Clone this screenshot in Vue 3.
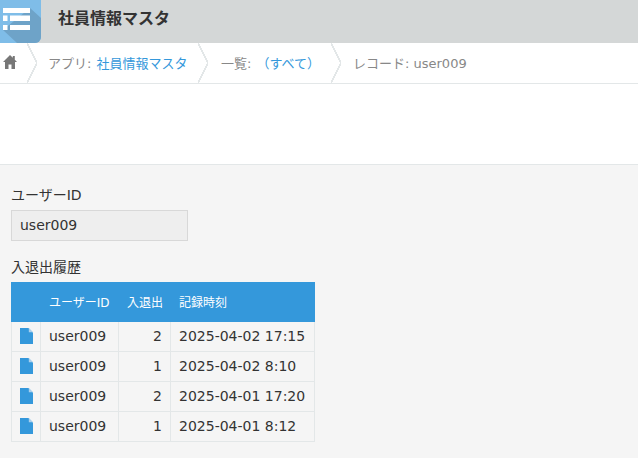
<script setup>
const rows = [
  { id: "user009", type: 2, time: "2025-04-02 17:15" },
  { id: "user009", type: 1, time: "2025-04-02 8:10" },
  { id: "user009", type: 2, time: "2025-04-01 17:20" },
  { id: "user009", type: 1, time: "2025-04-01 8:12" },
];
</script>

<template>
  <div class="page">
    <header class="app-header">
      <div class="app-icon">
        <svg width="41" height="43" viewBox="0 0 41 43">
          <path d="M0 0H41V37a6 6 0 0 1-6 6H0Z" fill="#7fbde8" />
          <path d="M3 30 30 8 41 18V37a6 6 0 0 1-6 6H17Z" fill="#6ea3c8" />
          <path d="M3 8H30V13H3ZM3 15.500H7.500V21H3ZM10 15.500H30V21H10ZM3 25H7.500V30H3ZM10 25H30V30H10Z" fill="#fff" />
        </svg>
      </div>
      <h1 class="app-title">社員情報マスタ</h1>
    </header>

    <nav class="breadcrumb">
      <div class="crumb crumb--home">
        <svg width="14" height="14" viewBox="0 0 14 14">
          <path d="M7 0 0 7H2V14H5.500V9.500H8.500V14H12V7H14L11.800 4.800V1H9.800V2.800Z" fill="#777" />
        </svg>
      </div>
      <div class="crumb crumb--app">アプリ: <a>社員情報マスタ</a></div>
      <div class="crumb crumb--list">一覧: <a>（すべて）</a></div>
      <div class="crumb crumb--record">レコード: user009</div>
    </nav>

    <div class="toolbar"></div>

    <main class="record">
      <label class="field-label">ユーザーID</label>
      <div class="field-value">user009</div>

      <label class="field-label field-label--table">入退出履歴</label>
      <table class="history">
        <thead>
          <tr>
            <th class="col-icon"></th>
            <th class="col-id">ユーザーID</th>
            <th class="col-type">入退出</th>
            <th class="col-time">記録時刻</th>
          </tr>
        </thead>
        <tbody>
          <tr v-for="(row, i) in rows" :key="i">
            <td class="cell-icon">
              <svg width="13" height="16" viewBox="0 0 13 16">
                <path d="M0 0H8.500L13 4.500V16H0Z" fill="#3498db" />
                <path d="M8.800 0 13 4.200H8.800Z" fill="#a9d0ee" />
              </svg>
            </td>
            <td>{{ row.id }}</td>
            <td class="cell-num">{{ row.type }}</td>
            <td>{{ row.time }}</td>
          </tr>
        </tbody>
      </table>
    </main>
  </div>
</template>

<style>
html,
body {
  margin: 0;
  background: #f5f5f5;
}
</style>

<style scoped>
.page {
  width: 638px;
  height: 458px;
  overflow: hidden;
  font-family: "DejaVu Sans", "Noto Sans CJK JP", sans-serif;
  font-size: 14px;
  color: #333;
  background: #f5f5f5;
}

.app-header {
  display: flex;
  align-items: center;
  height: 43px;
  background: #d4d7d7;
}

.app-icon {
  width: 41px;
  height: 43px;
}

.app-icon svg {
  display: block;
}

.app-title {
  margin: 0 0 10px 17px;
  font-size: 16px;
  font-weight: 700;
  color: #333;
}

.breadcrumb {
  display: flex;
  height: 40px;
  background: #fff;
  border-bottom: 1px solid #e3e7e8;
  color: #888;
  font-size: 13px;
}

.crumb {
  position: relative;
  display: flex;
  align-items: center;
  gap: 5px;
  box-sizing: border-box;
  padding-bottom: 2px;
}

.crumb--home {
  width: 27px;
  padding-left: 3px;
}

.crumb--app {
  width: 171px;
  padding-left: 21px;
}

.crumb--list {
  width: 133px;
  padding-left: 23px;
}

.crumb--record {
  padding-left: 22px;
}

/* chevron between two crumbs */
.crumb::after {
  content: "";
  position: absolute;
  left: 100%;
  top: 0;
  width: 10px;
  height: 40px;
  background: linear-gradient(to top right, transparent 46%, #e3e7e8 46%, #e3e7e8 54%, transparent 54%) top / 100% 50% no-repeat,
    linear-gradient(to bottom right, transparent 46%, #e3e7e8 46%, #e3e7e8 54%, transparent 54%) bottom / 100% 50% no-repeat;
}

.crumb:last-child::after {
  display: none;
}

.crumb a {
  color: #3498db;
}

.toolbar {
  height: 80px;
  background: #fff;
  border-bottom: 1px solid #e3e7e8;
}

.record {
  padding: 20px 11px 0;
}

.field-label {
  display: block;
  height: 20px;
  line-height: 20px;
  font-size: 14px;
}

.field-value {
  box-sizing: border-box;
  width: 177px;
  height: 31px;
  margin-top: 5px;
  padding-left: 8px;
  line-height: 28px;
  background: #eee;
  border: 1px solid #d8d8d8;
}

.field-label--table {
  margin-top: 16px;
}

.history {
  margin-top: 5px;
  border-spacing: 0;
  table-layout: fixed;
  width: 304px;
}

.history th,
.history td {
  box-sizing: border-box;
  padding: 0 0 2px 8px;
}

.history th {
  height: 40px;
  background: #3498db;
  color: #fff;
  font-size: 12px;
  font-weight: 400;
  text-align: left;
}

.history td {
  height: 30px;
  border-right: 1px solid #e3e7e8;
  border-bottom: 1px solid #e3e7e8;
  white-space: nowrap;
}

.col-icon {
  width: 30px;
}

.col-id {
  width: 78px;
}

.col-type {
  width: 52px;
}

.history .cell-icon {
  padding: 0 0 2px;
  border-left: 1px solid #e3e7e8;
}

.cell-icon svg {
  display: block;
  margin: 0 auto;
}

.history .cell-num {
  padding: 0 8px 2px 0;
  text-align: right;
}
</style>
